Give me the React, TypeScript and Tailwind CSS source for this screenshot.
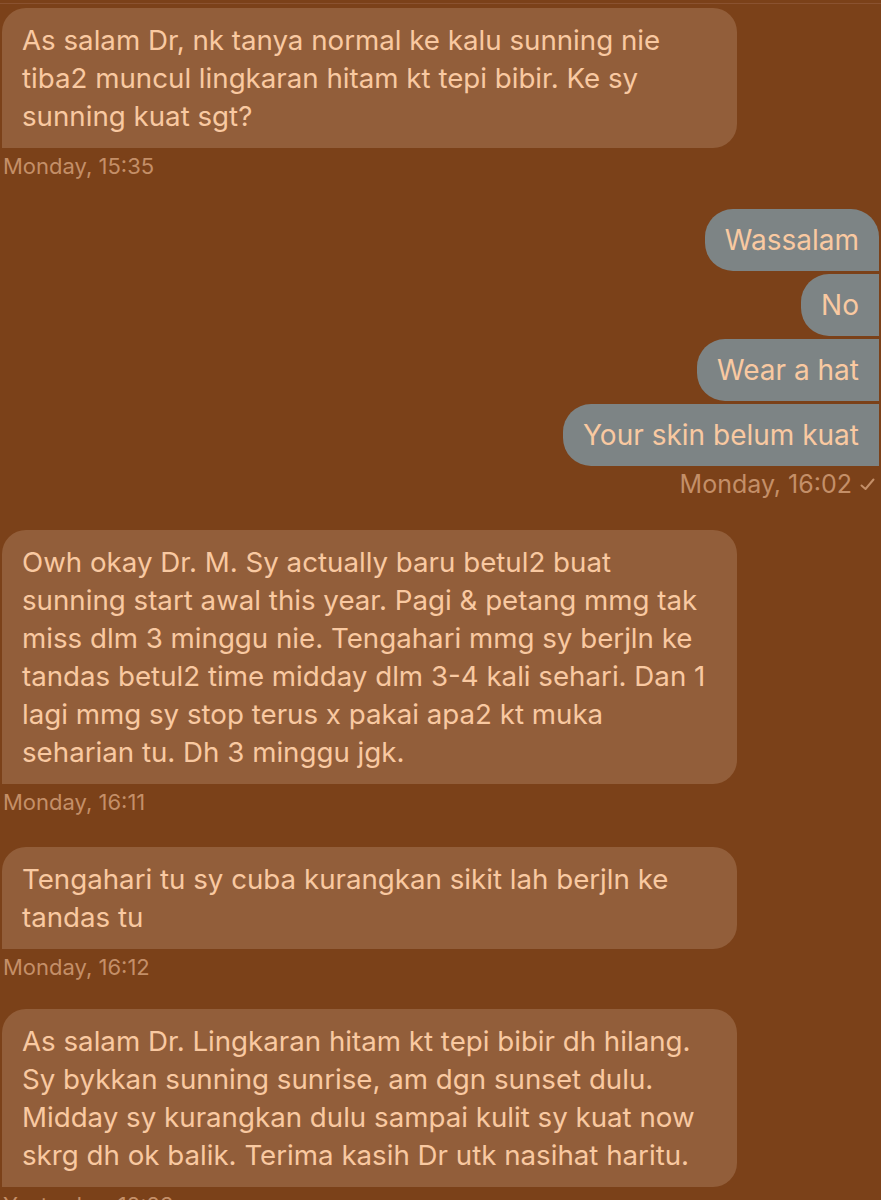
import React from "react";

const font = { fontFamily: "Inter, 'Noto Sans', sans-serif" };

function In({ lines }: { lines: string[] }) {
  return (
    <div className="w-[735px] rounded-[24px] rounded-bl-none bg-[#925e3a] pl-[20px] pr-[20px] py-[13px] text-[27.7px] leading-[38px] text-[#f9c9a1]">
      {lines.map((l, i) => (
        <div key={i} className="whitespace-nowrap">{l}</div>
      ))}
    </div>
  );
}

function Ts({ children }: { children: React.ReactNode }) {
  return (
    <div className="mt-[6px] pl-[1px] text-[22px] leading-[24px] text-[#c48f68]">{children}</div>
  );
}

function Out({ text, first }: { text: string; first?: boolean }) {
  return (
    <div
      className={`self-end rounded-l-[28px] bg-[#7d8485] px-[20px] py-[12px] text-[28px] leading-[38px] text-[#f9c9a1] whitespace-nowrap ${first ? "rounded-tr-[28px]" : ""}`}
    >
      {text}
    </div>
  );
}

export default function App() {
  return (
    <div className="w-[881px] h-[1200px] overflow-hidden bg-[#7b4119]" style={font}>
      <div className="h-[4px] border-b border-[#8a5230]" />
      <div className="px-[2px] pt-[4px]">
        <div className="mb-[31px]">
          <In
            lines={[
              "As salam Dr, nk tanya normal ke kalu sunning nie",
              "tiba2 muncul lingkaran hitam kt tepi bibir. Ke sy",
              "sunning kuat sgt?",
            ]}
          />
          <Ts>Monday, 15:35</Ts>
        </div>
        <div className="mb-[34px]">
          <div className="flex flex-col gap-[3px]">
            <Out text="Wassalam" first />
            <Out text="No" />
            <Out text="Wear a hat" />
            <Out text="Your skin belum kuat" />
          </div>
          <div className="mt-[6px] flex items-center justify-end gap-[8px] pr-[4px] text-[25px] leading-[24px] text-[#c48f68]">
            <span>Monday, 16:02</span>
            <svg width="15" height="13" viewBox="0 0 15 13" fill="none" stroke="currentColor" strokeWidth="2" strokeLinecap="round" strokeLinejoin="round">
              <path d="M1.5 7.5 L5.5 11 L13.5 1.5" />
            </svg>
          </div>
        </div>
        <div className="mb-[33px]">
          <In
            lines={[
              "Owh okay Dr. M. Sy actually baru betul2 buat",
              "sunning start awal this year. Pagi & petang mmg tak",
              "miss dlm 3 minggu nie. Tengahari mmg sy berjln ke",
              "tandas betul2 time midday dlm 3-4 kali sehari. Dan 1",
              "lagi mmg sy stop terus x pakai apa2 kt muka",
              "seharian tu. Dh 3 minggu jgk.",
            ]}
          />
          <Ts>Monday, 16:11</Ts>
        </div>
        <div className="mb-[30px]">
          <In
            lines={[
              "Tengahari tu sy cuba kurangkan sikit lah berjln ke",
              "tandas tu",
            ]}
          />
          <Ts>Monday, 16:12</Ts>
        </div>
        <div>
          <In
            lines={[
              "As salam Dr. Lingkaran hitam kt tepi bibir dh hilang.",
              "Sy bykkan sunning sunrise, am dgn sunset dulu.",
              "Midday sy kurangkan dulu sampai kulit sy kuat now",
              "skrg dh ok balik. Terima kasih Dr utk nasihat haritu.",
            ]}
          />
          <Ts>Yesterday, 12:23</Ts>
        </div>
      </div>
    </div>
  );
}
